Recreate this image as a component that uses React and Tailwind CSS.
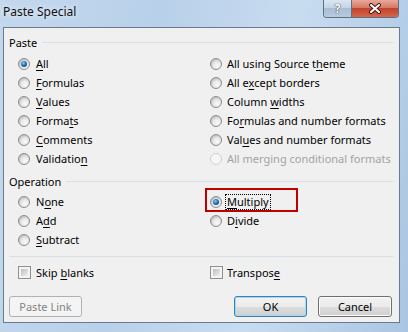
import React from 'react';

// Win7 style radio glyph
const Radio = ({ checked, disabled }) => (
    <svg width="12" height="12" viewBox="0 0 12 12" className="shrink-0">
        <circle
            cx="6"
            cy="6"
            r="5.5"
            fill={disabled ? '#f6f6f6' : 'url(#radioFace)'}
            stroke={disabled ? '#cfcfcf' : '#8c8e90'}
        />
        {checked && <circle cx="6" cy="6" r="3" fill="url(#radioDot)" />}
    </svg>
);

const Check = () => (
    <div className="w-[13px] h-[13px] shrink-0 border border-[#8e8f8f] bg-[#f4f4f4] p-[2px]">
        <div className="w-full h-full bg-gradient-to-br from-[#bdbdbd] to-[#f2f2f2]"></div>
    </div>
);

// label with one underlined access key
const Label = ({ text, k, disabled }) => {
    const i = k ?? -1;
    return (
        <span className={disabled ? 'text-[#a3a3a3]' : 'text-black'}>
            {i < 0 ? text : (
                <>
                    {text.slice(0, i)}
                    <span className="underline underline-offset-[2px]">{text[i]}</span>
                    {text.slice(i + 1)}
                </>
            )}
        </span>
    );
};

const Option = ({ text, k, checked, disabled, gap = 'gap-[6px]' }) => (
    <div className={`h-[19px] flex items-center ${gap}`}>
        <Radio checked={checked} disabled={disabled} />
        <Label text={text} k={k} disabled={disabled} />
    </div>
);

const GroupLabel = ({ children }) => (
    <div className="ml-[5px] mr-[6px] h-[16px] flex items-center gap-[5px]">
        <span>{children}</span>
        <div className="flex-1 h-px bg-[#d5dfe5]"></div>
    </div>
);

const Button = ({ children, variant }) => {
    if (variant === 'disabled') {
        return (
            <div className="w-[73px] h-[21px] rounded-[3px] border border-[#adb2b5] bg-[#f4f4f4] text-[#838383] flex items-center justify-center">
                {children}
            </div>
        );
    }
    const border = variant === 'default'
        ? 'border-[#3c7fb1] shadow-[inset_0_0_0_1px_#9ddcf9]'
        : 'border-[#707070] shadow-[inset_0_0_0_1px_#fbfbfb]';
    return (
        <div className={`h-[21px] rounded-[3px] border ${border} bg-[linear-gradient(#f2f2f2_0%,#ebebeb_50%,#dddddd_50%,#cfcfcf_100%)] text-black flex items-center justify-center`}>
            {children}
        </div>
    );
};

export default function App() {
    return (
        <div className="w-[408px] h-[332px] flex flex-col overflow-hidden font-['Noto_Sans',sans-serif] text-[11px] leading-[15px] bg-[linear-gradient(100deg,#c3d8ee_0%,#b9d0ea_35%,#c8dcf0_65%,#aac5e3_100%)]">
            <svg width="0" height="0" className="absolute">
                <defs>
                    <radialGradient id="radioFace" cx="0.6" cy="0.65" r="0.6">
                        <stop offset="0" stopColor="#fbfbfb" />
                        <stop offset="0.6" stopColor="#e6e6e6" />
                        <stop offset="1" stopColor="#c2c2c2" />
                    </radialGradient>
                    <radialGradient id="radioDot" cx="0.4" cy="0.35" r="0.7">
                        <stop offset="0" stopColor="#8fd0f5" />
                        <stop offset="0.5" stopColor="#2a80c8" />
                        <stop offset="1" stopColor="#0d3f7d" />
                    </radialGradient>
                </defs>
            </svg>

            {/* title bar */}
            <div className="h-[27px] shrink-0 flex items-start justify-between pl-[3px] pr-[9px]">
                <span className="pt-[4px] text-[12px] leading-[16px] text-[#111] [text-shadow:0_0_6px_#ffffff]">Paste Special</span>
                <div className="flex h-[18px] border border-t-0 border-[#5f7083] rounded-b-[4px] overflow-hidden">
                    <div className="w-[28px] flex items-center justify-center border-r border-[#5f7083] bg-[linear-gradient(#dbe6f2_0%,#c5d4e6_45%,#a9bdd4_50%,#b8cbe0_100%)]">
                        <span className="text-[12px] font-bold text-white [text-shadow:0_0_1px_#303030,0_0_1px_#303030]">?</span>
                    </div>
                    <div className="w-[46px] flex items-center justify-center bg-[linear-gradient(#e9a99c_0%,#d67a68_45%,#c2432b_50%,#d4674e_100%)]">
                        <svg width="14" height="11" viewBox="0 0 14 11">
                            <path d="M3 2 L11 9 M11 2 L3 9" stroke="#4a1b14" strokeWidth="4" strokeLinecap="round" />
                            <path d="M3 2 L11 9 M11 2 L3 9" stroke="#ffffff" strokeWidth="2" strokeLinecap="round" />
                        </svg>
                    </div>
                </div>
            </div>

            {/* client area */}
            <div className="ml-[3px] mr-[8px] h-[296px] shrink-0 border border-[#6b7a8a] bg-[#f0f0f0] flex flex-col">
                <div className="mt-[6px]">
                    <GroupLabel>Paste</GroupLabel>
                </div>
                <div className="mt-[4px] ml-[14px] flex">
                    <div className="w-[192px] flex flex-col">
                        <Option text="All" k={0} checked />
                        <Option text="Formulas" k={0} />
                        <Option text="Values" k={0} />
                        <Option text="Formats" k={5} />
                        <Option text="Comments" k={0} />
                        <Option text="Validation" k={9} />
                    </div>
                    <div className="flex flex-col">
                        <Option text="All using Source theme" k={18} gap="gap-[5px]" />
                        <Option text="All except borders" k={5} gap="gap-[5px]" />
                        <Option text="Column widths" k={7} gap="gap-[5px]" />
                        <Option text="Formulas and number formats" k={2} gap="gap-[5px]" />
                        <Option text="Values and number formats" k={3} gap="gap-[5px]" />
                        <Option text="All merging conditional formats" disabled gap="gap-[5px]" />
                    </div>
                </div>

                <div className="mt-[5px]">
                    <GroupLabel>Operation</GroupLabel>
                </div>
                <div className="mt-[3px] ml-[14px] flex">
                    <div className="w-[192px] flex flex-col">
                        <Option text="None" k={1} />
                        <Option text="Add" k={1} />
                        <Option text="Subtract" k={0} />
                    </div>
                    <div className="flex flex-col">
                        <div className="relative h-[19px] flex items-center gap-[3px]">
                            <Radio checked />
                            <span className="border border-dotted border-black px-[1px] leading-[14px]">
                                <Label text="Multiply" k={0} />
                            </span>
                            <div className="absolute left-[-5px] top-[-4px] w-[93px] h-[24px] border-2 border-[#c00000]"></div>
                        </div>
                        <Option text="Divide" k={1} gap="gap-[5px]" />
                    </div>
                </div>

                <div className="mt-[7px] ml-[5px] mr-[6px] h-px bg-[#d5dfe5]"></div>

                <div className="mt-[6px] ml-[14px] h-[18px] flex items-center">
                    <div className="w-[192px] flex items-center gap-[5px]">
                        <Check />
                        <Label text="Skip blanks" k={5} />
                    </div>
                    <div className="flex items-center gap-[4px]">
                        <Check />
                        <Label text="Transpose" k={8} />
                    </div>
                </div>

                <div className="mt-[15px] ml-[5px] mr-[7px] flex items-center">
                    <Button variant="disabled">Paste Link</Button>
                    <div className="flex-1"></div>
                    <div className="w-[73px]">
                        <Button variant="default">OK</Button>
                    </div>
                    <div className="w-[74px] ml-[11px]">
                        <Button>Cancel</Button>
                    </div>
                </div>
            </div>
        </div>
    );
}
